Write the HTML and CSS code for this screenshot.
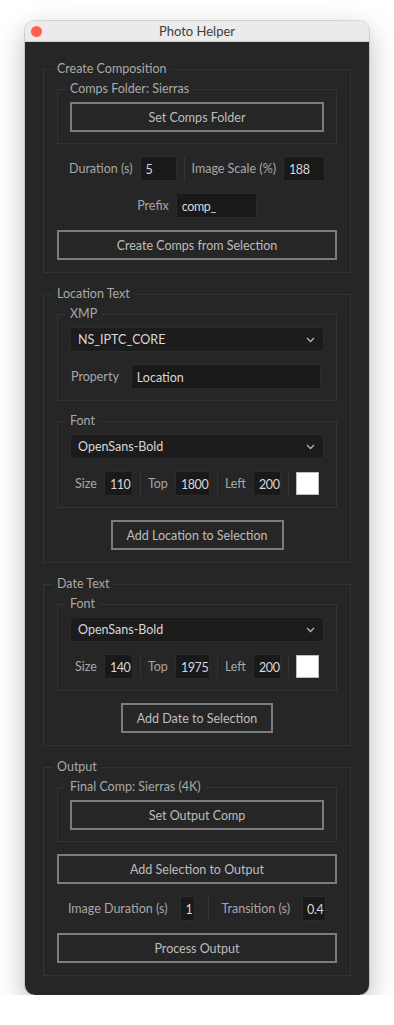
FILE: index.html
```html
<!DOCTYPE html>
<html lang="en">
<head>
  <meta charset="UTF-8">
  <title>Photo Helper</title>
  <link rel="stylesheet" href="styles.css">
</head>
<body>
  <div class="window">
    <!-- Title bar -->
    <div class="titlebar">
      <span class="close"></span>
      <span class="title">Photo Helper</span>
    </div>

    <div class="panel">
      <!-- Create Composition -->
      <fieldset class="group">
        <legend>Create Composition</legend>
        <div class="stack">
          <fieldset class="group sub">
            <legend>Comps Folder: Sierras</legend>
            <div class="stack">
              <button class="btn">Set Comps Folder</button>
            </div>
          </fieldset>
          <div class="row">
            <label>Duration (s)</label>
            <input class="field w-duration" type="text" value="5">
            <span class="sep"></span>
            <label>Image Scale (%)</label>
            <input class="field w-scale" type="text" value="188">
          </div>
          <div class="row">
            <label>Prefix</label>
            <input class="field w-prefix" type="text" value="comp_">
          </div>
          <button class="btn">Create Comps from Selection</button>
        </div>
      </fieldset>

      <!-- Location Text -->
      <fieldset class="group">
        <legend>Location Text</legend>
        <div class="stack">
          <fieldset class="group sub">
            <legend>XMP</legend>
            <div class="stack">
              <div class="dropdown">
                <span>NS_IPTC_CORE</span>
                <svg width="9" height="6" viewBox="0 0 9 6"><polyline points="1,1 4.5,4.5 8,1" fill="none" stroke="#b5b5b5" stroke-width="1.3"/></svg>
              </div>
              <div class="row wide">
                <label>Property</label>
                <input class="field grow" type="text" value="Location">
              </div>
            </div>
          </fieldset>
          <fieldset class="group sub">
            <legend>Font</legend>
            <div class="stack">
              <div class="dropdown">
                <span>OpenSans-Bold</span>
                <svg width="9" height="6" viewBox="0 0 9 6"><polyline points="1,1 4.5,4.5 8,1" fill="none" stroke="#b5b5b5" stroke-width="1.3"/></svg>
              </div>
              <div class="row">
                <label>Size</label>
                <input class="field w-size" type="text" value="110">
                <span class="sep"></span>
                <label>Top</label>
                <input class="field w-top" type="text" value="1800">
                <span class="sep"></span>
                <label>Left</label>
                <input class="field w-left" type="text" value="200">
                <span class="sep"></span>
                <span class="swatch"></span>
              </div>
            </div>
          </fieldset>
          <button class="btn inline">Add Location to Selection</button>
        </div>
      </fieldset>

      <!-- Date Text -->
      <fieldset class="group">
        <legend>Date Text</legend>
        <div class="stack">
          <fieldset class="group sub">
            <legend>Font</legend>
            <div class="stack">
              <div class="dropdown">
                <span>OpenSans-Bold</span>
                <svg width="9" height="6" viewBox="0 0 9 6"><polyline points="1,1 4.5,4.5 8,1" fill="none" stroke="#b5b5b5" stroke-width="1.3"/></svg>
              </div>
              <div class="row">
                <label>Size</label>
                <input class="field w-size" type="text" value="140">
                <span class="sep"></span>
                <label>Top</label>
                <input class="field w-top" type="text" value="1975">
                <span class="sep"></span>
                <label>Left</label>
                <input class="field w-left" type="text" value="200">
                <span class="sep"></span>
                <span class="swatch"></span>
              </div>
            </div>
          </fieldset>
          <button class="btn inline">Add Date to Selection</button>
        </div>
      </fieldset>

      <!-- Output -->
      <fieldset class="group">
        <legend>Output</legend>
        <div class="stack">
          <fieldset class="group sub">
            <legend>Final Comp: Sierras (4K)</legend>
            <div class="stack">
              <button class="btn">Set Output Comp</button>
            </div>
          </fieldset>
          <button class="btn">Add Selection to Output</button>
          <div class="row loose">
            <label>Image Duration (s)</label>
            <input class="field w-one" type="text" value="1">
            <span class="sep"></span>
            <label>Transition (s)</label>
            <input class="field w-trans" type="text" value="0.4">
          </div>
          <button class="btn">Process Output</button>
        </div>
      </fieldset>
    </div>
  </div>
</body>
</html>
```

FILE: styles.css
```css
* {
  box-sizing: border-box;
}

body {
  margin: 0;
  background: #ffffff;
  font-family: Lato, "Open Sans", sans-serif;
  font-size: 12.5px;
}

.window {
  width: 344px;
  margin: 21px 0 0 25px;
  border-radius: 10px;
  overflow: hidden;
  box-shadow: 0 10px 28px rgba(0, 0, 0, 0.28), 0 0 0 1px rgba(0, 0, 0, 0.12);
}

/* Title bar */
.titlebar {
  position: relative;
  height: 21px;
  background: #ebebeb;
  border-bottom: 1px solid #cfcfcf;
  display: flex;
  align-items: center;
  justify-content: center;
}

.close {
  position: absolute;
  left: 6px;
  top: 5px;
  width: 11px;
  height: 11px;
  border-radius: 50%;
  background: #fe5f57;
}

.title {
  color: #3d3d3d;
  font-size: 13px;
}

/* Panel */
.panel {
  background: #262626;
  padding: 19px 18px 19px;
  display: flex;
  flex-direction: column;
  gap: 13px;
}

.group {
  margin: 0;
  min-width: 0;
  border: 1px solid #333333;
  padding: 4px 13px 12px;
}

.group.sub {
  padding: 5px 12px 11px;
}

.group legend {
  margin-left: -5px;
  padding: 0 5px;
  line-height: 16px;
  color: #a9a9a9;
}

.stack {
  display: flex;
  flex-direction: column;
  gap: 12px;
}

/* Buttons */
.btn {
  height: 30px;
  background: #262626;
  border: 2px solid #7c7c7c;
  border-radius: 0;
  color: #bdbdbd;
  font: inherit;
  padding: 0;
}

.btn.inline {
  align-self: center;
  padding: 0 14px;
}

/* Rows of labelled fields */
.row {
  display: flex;
  align-items: center;
  justify-content: center;
  gap: 7px;
  height: 25px;
}

.row label {
  color: #a6a6a6;
}

.row.wide {
  justify-content: flex-start;
  gap: 12px;
  padding: 0 3px 0 1px;
}

.row.loose {
  gap: 12px;
}

.row.loose .sep {
  margin: 0 1px;
}

.field {
  height: 25px;
  background: #191919;
  border: 1px solid #2b2b2b;
  border-radius: 2px;
  color: #d8d8d8;
  font: inherit;
  letter-spacing: -0.4px;
  padding: 2px 0 0 5px;
  outline: none;
}

.w-duration { width: 37px; }
.w-scale { width: 42px; }
.w-prefix { width: 81px; }
.w-size { width: 29px; }
.w-top { width: 35px; }
.w-left { width: 28px; }
.w-one { width: 15px; }
.w-trans { width: 24px; padding-left: 4px; }
.grow { flex: 1; letter-spacing: 0; }

.sep {
  width: 1px;
  height: 25px;
  background: #333333;
}

.swatch {
  width: 23px;
  height: 23px;
  background: #ffffff;
  border: 1px solid #bdbdbd;
}

/* Dropdown */
.dropdown {
  height: 25px;
  display: flex;
  align-items: center;
  justify-content: space-between;
  background: #1c1c1c;
  border: 1px solid #2b2b2b;
  border-radius: 3px;
  padding: 0 8px 0 7px;
  color: #d8d8d8;
}
```
